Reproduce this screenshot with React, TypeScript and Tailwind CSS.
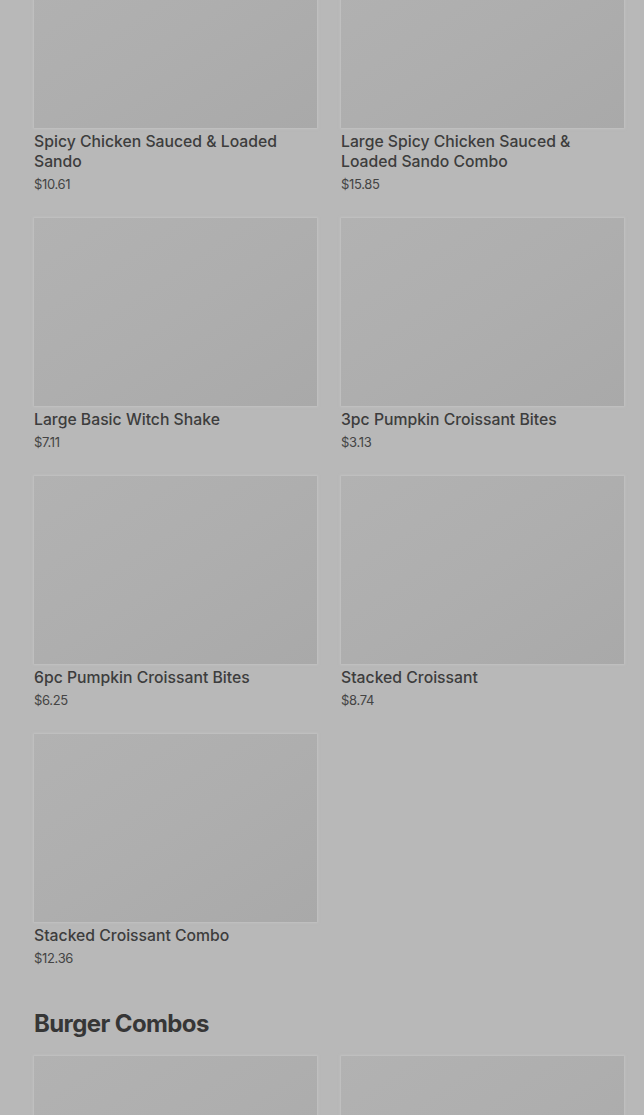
import React from "react";

type Item = { name: string; price: string };

const items: Item[] = [
  { name: "Spicy Chicken Sauced & Loaded Sando", price: "$10.61" },
  { name: "Large Spicy Chicken Sauced & Loaded Sando Combo", price: "$15.85" },
  { name: "Large Basic Witch Shake", price: "$7.11" },
  { name: "3pc Pumpkin Croissant Bites", price: "$3.13" },
  { name: "6pc Pumpkin Croissant Bites", price: "$6.25" },
  { name: "Stacked Croissant", price: "$8.74" },
  { name: "Stacked Croissant Combo", price: "$12.36" },
];

function Card({ item }: { item: Item }) {
  return (
    <div className="flex flex-col">
      <div className="h-[188px] w-full bg-linear-to-br from-[#b2b2b2] via-[#aeaeae] to-[#a9a9a9] shadow-[0_0_2px_1px_rgba(200,200,200,0.6)]" />
      <div className="mt-[4px] text-[15.75px] leading-[20px] font-medium text-[#3d3d3d] pr-4">
        {item.name}
      </div>
      <div className="mt-[3px] text-[13px] leading-[18px] text-[#444444] tracking-tight">
        {item.price}
      </div>
    </div>
  );
}

export default function App() {
  return (
    <div
      className="w-[644px] h-[1115px] overflow-hidden bg-[#b8b8b8]"
      style={{ fontFamily: "Inter, 'Noto Sans', Arial, sans-serif" }}
    >
      <div className="pl-[34px] pr-[20px] -mt-[60px]">
        <div className="grid grid-cols-2 gap-x-6 gap-y-[25px]">
          {items.map((it) => (
            <Card key={it.name} item={it} />
          ))}
        </div>
        <h2 className="mt-[41px] text-[24px] leading-[32px] font-bold tracking-tight text-[#363636]">
          Burger Combos
        </h2>
        <div className="mt-[16px] grid grid-cols-2 gap-x-6">
          <div className="h-[188px] bg-linear-to-br from-[#b2b2b2] via-[#aeaeae] to-[#a9a9a9] shadow-[0_0_2px_1px_rgba(200,200,200,0.6)]" />
          <div className="h-[188px] bg-linear-to-br from-[#b2b2b2] via-[#aeaeae] to-[#a9a9a9] shadow-[0_0_2px_1px_rgba(200,200,200,0.6)]" />
        </div>
      </div>
    </div>
  );
}
